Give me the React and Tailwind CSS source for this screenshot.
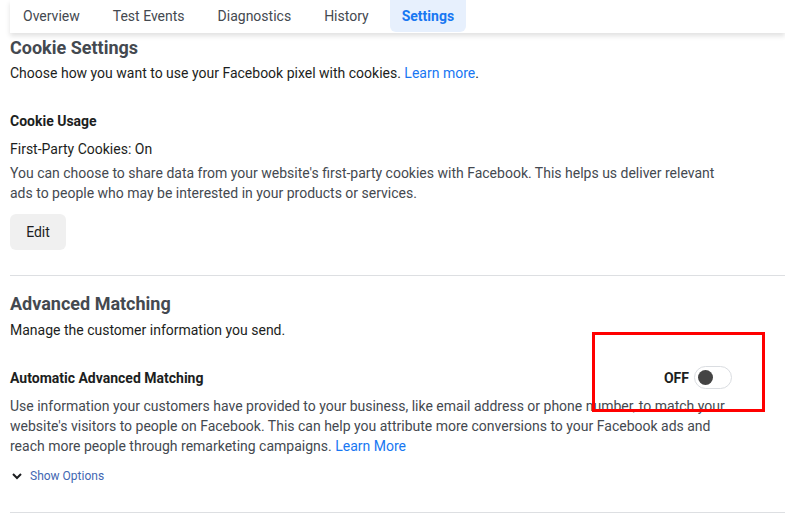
import { useState } from 'react'

const TABS = ['Overview', 'Test Events', 'Diagnostics', 'History', 'Settings']

function Tabs({ active }) {
  return (
    <div className="h-[33px] bg-white shadow-[0_3px_5px_rgba(0,0,0,0.12)] flex gap-[9px] pl-px relative z-0">
      {TABS.map((t) => (
        <div
          key={t}
          className={
            t === active
              ? 'px-3 h-[32px] flex items-center rounded-b-md bg-[#e7f0fd] text-[#1877f2] font-bold text-sm'
              : 'px-3 h-[32px] flex items-center text-[#444950] text-sm'
          }
        >
          {t}
        </div>
      ))}
    </div>
  )
}

function Toggle({ on }) {
  return (
    <div className="flex items-center gap-[5px]">
      <span className="text-sm font-bold text-[#1c1e21]">{on ? 'ON' : 'OFF'}</span>
      <div className="w-[38px] h-[23px] rounded-full border border-[#dadde1] bg-white flex items-center px-[3px]">
        <div className="w-[15px] h-[15px] rounded-full bg-[#444]" />
      </div>
    </div>
  )
}

export default function App() {
  const [open, setOpen] = useState(false)

  return (
    <div className="relative w-[785px] h-[523px] overflow-hidden bg-white pl-[10px] text-[#1c1e21]" style={{ fontFamily: 'Roboto, "Noto Sans", sans-serif' }}>
      <Tabs active="Settings" />

      <section className="relative z-10 pt-[4px] pb-[25px] border-b border-[#dddfe2]">
        <h2 className="text-lg font-bold text-[#444950] leading-[22px]">Cookie Settings</h2>
        <p className="text-sm leading-5 mt-[4px]">
          Choose how you want to use your Facebook pixel with cookies. <span className="text-[#1877f2]">Learn more</span>.
        </p>

        <h3 className="text-sm font-bold leading-5 mt-[28px]">Cookie Usage</h3>
        <p className="text-sm leading-5 mt-[8px]">First-Party Cookies: On</p>
        <p className="text-sm leading-5 mt-[4px] w-[720px] text-[#444950]">
          You can choose to share data from your website's first-party cookies with Facebook. This helps us deliver relevant ads to people who may be interested in your products or services.
        </p>
        <button className="mt-[11px] w-[56px] h-[36px] rounded-md bg-[#f0f0f0] text-sm text-[#1c1e21]">Edit</button>
      </section>

      <section className="pt-[17px] pb-[28px] border-b border-[#dddfe2]">
        <h2 className="text-lg font-bold text-[#444950] leading-[22px]">Advanced Matching</h2>
        <p className="text-sm leading-5 mt-[5px]">Manage the customer information you send.</p>

        <div className="flex items-center justify-between w-[722px] mt-[26px]">
          <h3 className="text-sm font-bold leading-5">Automatic Advanced Matching</h3>
          <Toggle on={false} />
        </div>
        <p className="text-sm leading-5 mt-[7px] w-[720px] text-[#444950]">
          Use information your customers have provided to your business, like email address or phone number, to match your website's visitors to people on Facebook. This can help you attribute more conversions to your Facebook ads and reach more people through remarketing campaigns.{' '}
          <span className="text-[#1877f2]">Learn More</span>
        </p>
        <button onClick={() => setOpen(!open)} className="mt-[12px] flex items-center gap-[7px] text-xs text-[#4267b2]">
          <svg width="12" height="12" viewBox="0 0 12 12" className="ml-[1px]">
            <path d="M2 4l4 4 4-4" fill="none" stroke="#1c1e21" strokeWidth="2" />
          </svg>
          Show Options
        </button>
      </section>

      <div className="absolute left-[592px] top-[332px] w-[173px] h-[80px] border-[3px] border-[#ff0000] z-20" />
    </div>
  )
}
